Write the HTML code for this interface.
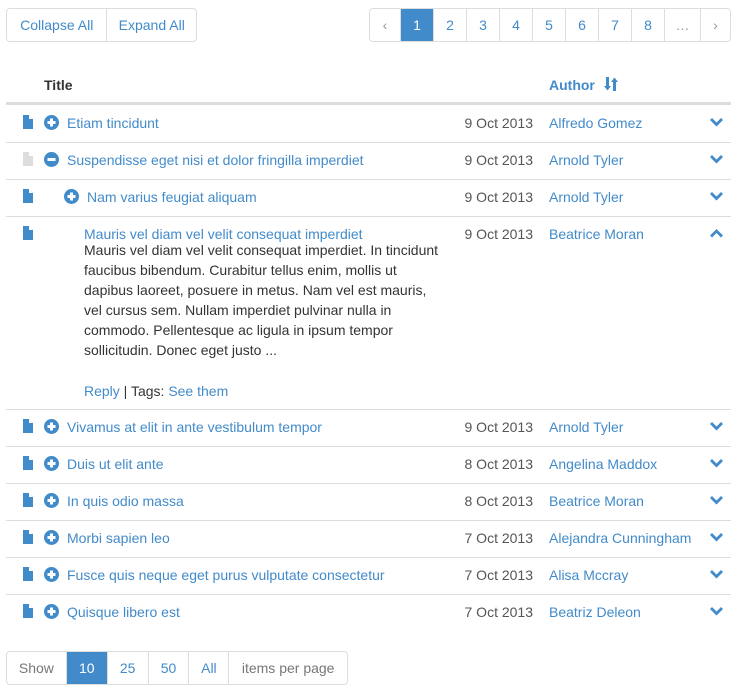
<!DOCTYPE html>
<html><head><meta charset="utf-8"><style>
*{box-sizing:border-box;margin:0;padding:0}
body{width:747px;height:689px;background:#fff;font-family:"Liberation Sans",Arial,sans-serif;font-size:14px;color:#333;position:relative;overflow:hidden}
.a{position:absolute}
.grp{position:absolute;display:flex;border:1px solid #ddd;border-radius:4px;overflow:hidden;height:34px}
.grp div{border-left:1px solid #ddd;display:flex;align-items:center;justify-content:center;color:#428bca;height:100%}
.grp div:first-child{border-left:none}
.grp .act{background:#428bca;color:#fff}
.grp .mut{color:#999}
.line{position:absolute;left:6px;width:725px;height:1px;background:#ddd}
.row{position:absolute;left:0;width:747px;height:20px;line-height:20px}
.blue{color:#428bca}
.date{position:absolute;right:214px;color:#555}
.auth{position:absolute;left:549px;color:#428bca}
.ttl{position:absolute;color:#428bca}
svg{position:absolute}
</style></head><body>
<div class="grp" style="left:6px;top:8px;width:191px"><div style="width:100px">Collapse All</div><div style="width:90px">Expand All</div></div>
<div class="grp" style="left:369px;top:8px;width:362px">
<div class="mut" style="width:30px">‹</div><div class="act" style="width:33px">1</div><div style="width:33px">2</div><div style="width:33px">3</div><div style="width:33px">4</div><div style="width:33px">5</div><div style="width:33px">6</div><div style="width:33px">7</div><div style="width:33px">8</div><div class="mut" style="width:36px">…</div><div class="mut" style="width:30px">›</div></div>

<div class="a" style="left:44px;top:76px;font-weight:bold;line-height:18px">Title</div>
<div class="a" style="left:549px;top:76px;font-weight:bold;color:#428bca;line-height:18px">Author</div>
<svg style="left:604px;top:77px" width="14" height="14" viewBox="0 0 14 14" fill="#428bca"><rect x="2" y="0" width="3" height="10"/><path d="M0 9h7l-3.5 4.5z"/><rect x="9" y="4" width="3" height="10"/><path d="M7 5h7l-3.5-4.5z"/></svg>
<div class="a" style="left:6px;top:102px;width:725px;height:3px;background:#ddd"></div>

<div class="line" style="top:142px"></div><div class="line" style="top:179px"></div><div class="line" style="top:216px"></div><div class="line" style="top:409px"></div><div class="line" style="top:446px"></div><div class="line" style="top:483px"></div><div class="line" style="top:520px"></div><div class="line" style="top:557px"></div><div class="line" style="top:594px"></div>

<div class="row" style="top:113px"><svg style="left:23px;top:2px" width="10" height="14" viewBox="0 0 10 14"><path d="M0 0h6l4 4v10H0z" fill="#428bca"/><path d="M6 0v4h4" fill="#fff"/></svg><svg style="left:44px;top:2px" width="15" height="15" viewBox="0 0 15 15"><circle cx="7.5" cy="7.5" r="7.5" fill="#428bca"/><path d="M6 3.5h3v2.5h2.5v3H9v2.5H6V9H3.5V6H6z" fill="#fff"/></svg><span class="ttl" style="left:67px">Etiam tincidunt</span><span class="date">9 Oct 2013</span><span class="auth">Alfredo Gomez</span><svg style="left:710px;top:5px" width="13" height="9" viewBox="0 0 13 9"><path d="M0 2l2-2 4.5 4.5L11 0l2 2-6.5 6.5z" fill="#428bca"/></svg></div>

<div class="row" style="top:150px"><svg style="left:23px;top:2px" width="10" height="14" viewBox="0 0 10 14"><path d="M0 0h6l4 4v10H0z" fill="#ddd"/><path d="M6 0v4h4" fill="#fff"/></svg><svg style="left:44px;top:2px" width="15" height="15" viewBox="0 0 15 15"><circle cx="7.5" cy="7.5" r="7.5" fill="#428bca"/><rect x="3.5" y="6" width="8" height="3" fill="#fff"/></svg><span class="ttl" style="left:67px">Suspendisse eget nisi et dolor fringilla imperdiet</span><span class="date">9 Oct 2013</span><span class="auth">Arnold Tyler</span><svg style="left:710px;top:5px" width="13" height="9" viewBox="0 0 13 9"><path d="M0 2l2-2 4.5 4.5L11 0l2 2-6.5 6.5z" fill="#428bca"/></svg></div>

<div class="row" style="top:187px"><svg style="left:23px;top:2px" width="10" height="14" viewBox="0 0 10 14"><path d="M0 0h6l4 4v10H0z" fill="#428bca"/><path d="M6 0v4h4" fill="#fff"/></svg><svg style="left:64px;top:2px" width="15" height="15" viewBox="0 0 15 15"><circle cx="7.5" cy="7.5" r="7.5" fill="#428bca"/><path d="M6 3.5h3v2.5h2.5v3H9v2.5H6V9H3.5V6H6z" fill="#fff"/></svg><span class="ttl" style="left:87px">Nam varius feugiat aliquam</span><span class="date">9 Oct 2013</span><span class="auth">Arnold Tyler</span><svg style="left:710px;top:5px" width="13" height="9" viewBox="0 0 13 9"><path d="M0 2l2-2 4.5 4.5L11 0l2 2-6.5 6.5z" fill="#428bca"/></svg></div>

<div class="row" style="top:224px"><svg style="left:23px;top:2px" width="10" height="14" viewBox="0 0 10 14"><path d="M0 0h6l4 4v10H0z" fill="#428bca"/><path d="M6 0v4h4" fill="#fff"/></svg><span class="ttl" style="left:84px">Mauris vel diam vel velit consequat imperdiet</span><span class="date">9 Oct 2013</span><span class="auth">Beatrice Moran</span><svg style="left:710px;top:5px" width="13" height="9" viewBox="0 0 13 9"><path d="M0 6.5l2 2 4.5-4.5 4.5 4.5 2-2L6.5 0z" fill="#428bca"/></svg></div>
<div class="a" style="left:84px;top:240px;width:360px;line-height:20px;color:#333">Mauris vel diam vel velit consequat imperdiet. In tincidunt faucibus bibendum. Curabitur tellus enim, mollis ut dapibus laoreet, posuere in metus. Nam vel est mauris, vel cursus sem. Nullam imperdiet pulvinar nulla in commodo. Pellentesque ac ligula in ipsum tempor sollicitudin. Donec eget justo ...</div>
<div class="a" style="left:84px;top:381px;line-height:20px"><span class="blue">Reply</span> | Tags: <span class="blue">See them</span></div>

<div class="row" style="top:417px"><svg style="left:23px;top:2px" width="10" height="14" viewBox="0 0 10 14"><path d="M0 0h6l4 4v10H0z" fill="#428bca"/><path d="M6 0v4h4" fill="#fff"/></svg><svg style="left:44px;top:2px" width="15" height="15" viewBox="0 0 15 15"><circle cx="7.5" cy="7.5" r="7.5" fill="#428bca"/><path d="M6 3.5h3v2.5h2.5v3H9v2.5H6V9H3.5V6H6z" fill="#fff"/></svg><span class="ttl" style="left:67px">Vivamus at elit in ante vestibulum tempor</span><span class="date">9 Oct 2013</span><span class="auth">Arnold Tyler</span><svg style="left:710px;top:5px" width="13" height="9" viewBox="0 0 13 9"><path d="M0 2l2-2 4.5 4.5L11 0l2 2-6.5 6.5z" fill="#428bca"/></svg></div>

<div class="row" style="top:454px"><svg style="left:23px;top:2px" width="10" height="14" viewBox="0 0 10 14"><path d="M0 0h6l4 4v10H0z" fill="#428bca"/><path d="M6 0v4h4" fill="#fff"/></svg><svg style="left:44px;top:2px" width="15" height="15" viewBox="0 0 15 15"><circle cx="7.5" cy="7.5" r="7.5" fill="#428bca"/><path d="M6 3.5h3v2.5h2.5v3H9v2.5H6V9H3.5V6H6z" fill="#fff"/></svg><span class="ttl" style="left:67px">Duis ut elit ante</span><span class="date">8 Oct 2013</span><span class="auth">Angelina Maddox</span><svg style="left:710px;top:5px" width="13" height="9" viewBox="0 0 13 9"><path d="M0 2l2-2 4.5 4.5L11 0l2 2-6.5 6.5z" fill="#428bca"/></svg></div>

<div class="row" style="top:491px"><svg style="left:23px;top:2px" width="10" height="14" viewBox="0 0 10 14"><path d="M0 0h6l4 4v10H0z" fill="#428bca"/><path d="M6 0v4h4" fill="#fff"/></svg><svg style="left:44px;top:2px" width="15" height="15" viewBox="0 0 15 15"><circle cx="7.5" cy="7.5" r="7.5" fill="#428bca"/><path d="M6 3.5h3v2.5h2.5v3H9v2.5H6V9H3.5V6H6z" fill="#fff"/></svg><span class="ttl" style="left:67px">In quis odio massa</span><span class="date">8 Oct 2013</span><span class="auth">Beatrice Moran</span><svg style="left:710px;top:5px" width="13" height="9" viewBox="0 0 13 9"><path d="M0 2l2-2 4.5 4.5L11 0l2 2-6.5 6.5z" fill="#428bca"/></svg></div>

<div class="row" style="top:528px"><svg style="left:23px;top:2px" width="10" height="14" viewBox="0 0 10 14"><path d="M0 0h6l4 4v10H0z" fill="#428bca"/><path d="M6 0v4h4" fill="#fff"/></svg><svg style="left:44px;top:2px" width="15" height="15" viewBox="0 0 15 15"><circle cx="7.5" cy="7.5" r="7.5" fill="#428bca"/><path d="M6 3.5h3v2.5h2.5v3H9v2.5H6V9H3.5V6H6z" fill="#fff"/></svg><span class="ttl" style="left:67px">Morbi sapien leo</span><span class="date">7 Oct 2013</span><span class="auth">Alejandra Cunningham</span><svg style="left:710px;top:5px" width="13" height="9" viewBox="0 0 13 9"><path d="M0 2l2-2 4.5 4.5L11 0l2 2-6.5 6.5z" fill="#428bca"/></svg></div>

<div class="row" style="top:565px"><svg style="left:23px;top:2px" width="10" height="14" viewBox="0 0 10 14"><path d="M0 0h6l4 4v10H0z" fill="#428bca"/><path d="M6 0v4h4" fill="#fff"/></svg><svg style="left:44px;top:2px" width="15" height="15" viewBox="0 0 15 15"><circle cx="7.5" cy="7.5" r="7.5" fill="#428bca"/><path d="M6 3.5h3v2.5h2.5v3H9v2.5H6V9H3.5V6H6z" fill="#fff"/></svg><span class="ttl" style="left:67px">Fusce quis neque eget purus vulputate consectetur</span><span class="date">7 Oct 2013</span><span class="auth">Alisa Mccray</span><svg style="left:710px;top:5px" width="13" height="9" viewBox="0 0 13 9"><path d="M0 2l2-2 4.5 4.5L11 0l2 2-6.5 6.5z" fill="#428bca"/></svg></div>

<div class="row" style="top:602px"><svg style="left:23px;top:2px" width="10" height="14" viewBox="0 0 10 14"><path d="M0 0h6l4 4v10H0z" fill="#428bca"/><path d="M6 0v4h4" fill="#fff"/></svg><svg style="left:44px;top:2px" width="15" height="15" viewBox="0 0 15 15"><circle cx="7.5" cy="7.5" r="7.5" fill="#428bca"/><path d="M6 3.5h3v2.5h2.5v3H9v2.5H6V9H3.5V6H6z" fill="#fff"/></svg><span class="ttl" style="left:67px">Quisque libero est</span><span class="date">7 Oct 2013</span><span class="auth">Beatriz Deleon</span><svg style="left:710px;top:5px" width="13" height="9" viewBox="0 0 13 9"><path d="M0 2l2-2 4.5 4.5L11 0l2 2-6.5 6.5z" fill="#428bca"/></svg></div>

<div class="grp" style="left:6px;top:651px;width:342px">
<div class="mut" style="width:59px;color:#777">Show</div><div class="act" style="width:41px">10</div><div style="width:41px">25</div><div style="width:41px">50</div><div style="width:40px">All</div><div style="width:119px;color:#777">items per page</div></div>
</body></html>
